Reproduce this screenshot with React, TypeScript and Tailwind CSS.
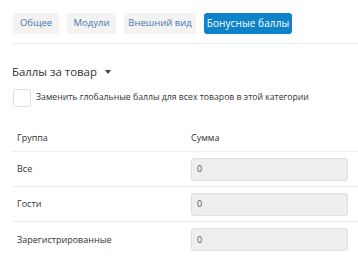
import React from "react";

const tabs = [
  { t: "Общее", w: "w-[46px]" },
  { t: "Модули", w: "w-[49px]" },
  { t: "Внешний вид", w: "w-[72px]" },
  { t: "Бонусные баллы", w: "w-[88px]" },
];
const rows = ["Все", "Гости", "Зарегистрированные"];

export default function App() {
  return (
    <div className="w-[358px] h-[264px] bg-white overflow-hidden px-3 pt-[13px]" style={{ fontFamily: '"Open Sans", "Noto Sans", sans-serif' }}>
      <div className="flex gap-2 pl-px pb-[9px] border-b border-[#eeeeee] -mr-3">
        {tabs.map((x, i) =>
          i === 3 ? (
            <div key={x.t} className={`${x.w} h-[21px] flex items-center justify-center rounded-[3px] bg-[#0d83c9] text-white text-[10px] tracking-[0.1px]`}>{x.t}</div>
          ) : (
            <div key={x.t} className={`${x.w} h-[21px] flex items-center justify-center rounded-[3px] bg-[#f4f3f2] text-[#3f76b5] text-[9.5px]`}>{x.t}</div>
          )
        )}
      </div>
      <div className="flex items-center mt-[20px] h-[16px]">
        <span className="text-[11.4px] text-[#333]">Баллы за товар</span>
        <svg className="ml-[8px]" width="6" height="4" viewBox="0 0 6 4"><path d="M0 0h6L3 4z" fill="#444" /></svg>
      </div>
      <div className="flex items-center mt-[9px] h-[18px]">
        <div className="w-[18px] h-[18px] ml-px rounded-[3px] border border-[#dddddd] bg-white" />
        <span className="ml-[5px] text-[8.7px] text-[#333]">Заменить глобальные баллы для всех товаров в этой категории</span>
      </div>
      <div className="mt-[17px] w-[346px] text-[9px] text-[#333]">
        <div className="flex h-[28px] items-center border-b border-[#eeeeee]">
          <div className="w-[179px] pl-[5px]">Группа</div>
          <div>Сумма</div>
        </div>
        {rows.map((r) => (
          <div key={r} className="flex h-[35px] items-center border-b border-[#eeeeee] last:border-b-0">
            <div className="w-[179px] pl-[5px]">{r}</div>
            <div className="w-[157px] h-[23px] rounded-[3px] border border-[#dedede] bg-[#eeeeee] flex items-center pl-[5px] text-[#555]">0</div>
          </div>
        ))}
      </div>
    </div>
  );
}
